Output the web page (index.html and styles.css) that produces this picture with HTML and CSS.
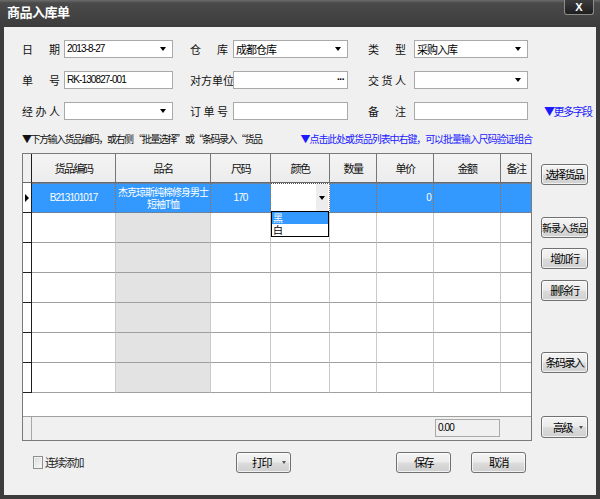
FILE: index.html
```html
<!DOCTYPE html>
<html lang="zh-CN">
<head>
<meta charset="utf-8">
<title>商品入库单</title>
<link rel="stylesheet" href="styles.css">
</head>
<body>
<div class="window">
  <div class="titlebar">
    <span class="title">商品入库单</span>
    <span class="close">X</span>
  </div>
  <div class="content">
    <div class="form">
      <div class="lbl"><span>日</span><span>期</span></div>
      <div class="field"><span class="num">2013-8-27</span><i class="arrow"></i></div>
      <div class="lbl l2"><span>仓</span><span>库</span></div>
      <div class="field"><span class="txt">成都仓库</span><i class="arrow"></i></div>
      <div class="lbl l3"><span>类</span><span>型</span></div>
      <div class="field"><span class="txt">采购入库</span><i class="arrow"></i></div>
      <div></div>

      <div class="lbl"><span>单</span><span>号</span></div>
      <div class="field"><span class="num">RK-130827-001</span></div>
      <div class="lbl l2"><span>对</span><span>方</span><span>单</span><span>位</span></div>
      <div class="field"><span class="dots">···</span></div>
      <div class="lbl l3"><span>交</span><span>货</span><span>人</span></div>
      <div class="field"><i class="arrow"></i></div>
      <div></div>

      <div class="lbl"><span>经</span><span>办</span><span>人</span></div>
      <div class="field"><i class="arrow"></i></div>
      <div class="lbl l2"><span>订</span><span>单</span><span>号</span></div>
      <div class="field"></div>
      <div class="lbl l3"><span>备</span><span>注</span></div>
      <div class="field"></div>
      <span class="more">▼更多字段</span>
    </div>

    <div class="hint">
      <span class="hint-l">▼下方输入货品编码，或右侧 “批量选择” 或“条码录入“货品</span>
      <span class="hint-r">▼点击此处或货品列表中右键，可以批量输入尺码验证组合</span>
    </div>

    <div class="main">
      <div class="grid">
        <div class="row head">
          <div class="rh"></div><div>货品编码</div><div>品名</div><div>尺码</div><div>颜色</div><div>数量</div><div>单价</div><div>金额</div><div>备注</div>
        </div>
        <div class="row sel">
          <div class="rh"><i class="marker"></i></div>
          <div><span class="num">B213101017</span></div>
          <div class="nm-text">杰克琼斯纯棉修身男士<br>短袖T恤</div>
          <div><span class="num">170</span></div>
          <div class="color">
            <span class="ddbtn"><i class="arrow"></i></span>
            <div class="ddlist"><div class="on">黑</div><div>白</div></div>
          </div>
          <div></div>
          <div class="right"><span class="num">0</span></div>
          <div></div>
          <div></div>
        </div>
        <div class="row"><div class="rh"></div><div></div><div class="nm"></div><div></div><div></div><div></div><div></div><div></div><div></div></div>
        <div class="row"><div class="rh"></div><div></div><div class="nm"></div><div></div><div></div><div></div><div></div><div></div><div></div></div>
        <div class="row"><div class="rh"></div><div></div><div class="nm"></div><div></div><div></div><div></div><div></div><div></div><div></div></div>
        <div class="row"><div class="rh"></div><div></div><div class="nm"></div><div></div><div></div><div></div><div></div><div></div><div></div></div>
        <div class="row"><div class="rh"></div><div></div><div class="nm"></div><div></div><div></div><div></div><div></div><div></div><div></div></div>
        <div class="row"><div class="rh"></div><div></div><div class="nm"></div><div></div><div></div><div></div><div></div><div></div><div></div></div>
        <div class="filler"></div>
        <div class="gfoot">
          <div class="rh"></div><div></div><div></div><div></div><div></div><div></div><div></div>
          <div><span class="total"><span class="num">0.00</span></span></div>
          <div></div>
        </div>
      </div>
      <div class="side">
        <span class="btn b-select">选择货品</span>
        <span class="btn b-new">新录入货品</span>
        <span class="btn b-add">增加行</span>
        <span class="btn b-del">删除行</span>
        <span class="btn b-bar">条码录入</span>
        <span class="btn b-adv drop"><span class="t">高级</span><i class="darr"></i></span>
      </div>
    </div>

    <div class="bottom">
      <div class="chk-group"><span class="chk"></span><span class="chk-label">连续添加</span></div>
      <span class="btn bbtn drop"><span class="t">打印</span><i class="darr"></i></span>
      <span class="btn bbtn save">保存</span>
      <span class="btn bbtn cancel">取消</span>
    </div>
  </div>
</div>
</body>
</html>
```

FILE: styles.css
```css
* { box-sizing: border-box; margin: 0; padding: 0; }
html, body { width: 600px; height: 499px; overflow: hidden; }
body {
  font-family: "Noto Sans CJK SC", "Noto Sans", sans-serif;
  font-size: 11px;
  line-height: 1;
  color: #000;
  background: #3b3b3b;
}
.window {
  width: 600px;
  height: 499px;
  display: flex;
  flex-direction: column;
  padding: 0 4px 4px;
  background: linear-gradient(#6c6c6c 0, #4a4a4a 3px, #3c3c3c 27px, #3c3c3c 100%);
}
.titlebar {
  height: 27px;
  flex: none;
  display: flex;
  align-items: flex-start;
}
.title {
  color: #fff;
  font-weight: bold;
  font-size: 13px;
  line-height: 14px;
  padding: 5px 0 0 3px;
  letter-spacing: -0.5px;
}
.close {
  margin-left: auto;
  margin-right: 2px;
  width: 30px;
  height: 15px;
  background: linear-gradient(#3c3c3c, #1f1f1f);
  border: 1px solid #8c8c8c;
  border-top: none;
  border-radius: 0 0 3px 3px;
  color: #fff;
  font: bold 11px/14px "Liberation Sans", sans-serif;
  text-align: center;
}
.content {
  flex: 1;
  background: #f0f0f0;
  padding: 13px 8px 0 18px;
}

/* form */
.form {
  display: grid;
  grid-template-columns: 42px 109px 60px 115px 66px 114px auto;
  grid-auto-rows: 18px;
  row-gap: 13px;
}
.lbl {
  display: flex;
  justify-content: space-between;
  align-items: center;
  width: 38px;
  color: #111;
}
.lbl.l2 { margin-left: 17px; }
.lbl.l3 { margin-left: 20px; }
.field {
  background: #fff;
  border: 1px solid #a9a9a9;
  display: flex;
  align-items: center;
  padding: 0 2px;
  overflow: hidden;
}
.num {
  font-family: "Liberation Sans", sans-serif;
  font-size: 10px;
  letter-spacing: -0.9px;
}
.txt { font-size: 11px; letter-spacing: -1px; }
.arrow {
  display: block;
  margin-left: auto;
  margin-right: 4px;
  width: 0;
  height: 0;
  border-left: 3.5px solid transparent;
  border-right: 3.5px solid transparent;
  border-top: 4px solid #000;
}
.dots {
  margin-left: auto;
  margin-right: 1px;
  font-family: "Liberation Sans", sans-serif;
  font-weight: bold;
  font-size: 10px;
  letter-spacing: -1px;
}
.more {
  color: #1a1aff;
  padding-left: 16px;
  letter-spacing: -1.5px;
  display: flex;
  align-items: center;
  white-space: nowrap;
}

/* hint */
.hint {
  display: flex;
  justify-content: space-between;
  align-items: center;
  width: 510px;
  height: 16px;
  margin-top: 11px;
  white-space: nowrap;
  font-size: 10px;
}
.hint-l { letter-spacing: -1.5px; color: #111; }
.hint-r { color: #1a1aff; letter-spacing: -1.1px; }

/* main */
.main {
  display: flex;
  gap: 9px;
  margin-top: 6px;
  height: 288px;
}
.grid {
  width: 510px;
  border: 1px solid #7a7a7a;
  display: flex;
  flex-direction: column;
  background: #fff;
}
.row, .gfoot {
  display: grid;
  grid-template-columns: 9px 84px 95px 60px 59px 47px 57px 67px 30px;
  height: 30px;
  flex: none;
}
.row.head { height: 29px; }
.row > div {
  border-right: 1px solid #cacaca;
  border-bottom: 1px solid #a0a0a0;
  display: flex;
  align-items: center;
  justify-content: center;
  text-align: center;
}
.row > div:last-child { border-right: none; }
.head > div {
  background: linear-gradient(#f4f4f4, #ececec);
  border-right-color: #767676;
  border-bottom-color: #686868;
  letter-spacing: -1.5px;
  color: #111;
}
.row > .rh {
  border-right-color: #1e1e1e;
  border-bottom-color: #1e1e1e;
  background: #fff;
}
.head > .rh { background: #f0f0f0; border-bottom-color: #686868; }
.row > .nm { background: #e3e3e3; }

.sel > div {
  background: #3399ff;
  color: #fff;
  border-top: 1px dotted #9c6c48;
  border-right: 1px dotted #9c6c48;
  border-bottom: 1px dotted #9c6c48;
}
.sel > .rh {
  background: #fff;
  border-top: none;
  border-right: 1px solid #1e1e1e;
  border-bottom: 1px solid #1e1e1e;
  justify-content: flex-start;
  padding-left: 2px;
}
.marker {
  display: block;
  width: 0;
  height: 0;
  border-top: 4px solid transparent;
  border-bottom: 4px solid transparent;
  border-left: 4px solid #000;
}
.sel > .nm-text {
  font-size: 10px;
  line-height: 12px;
  letter-spacing: -1px;
  white-space: nowrap;
}
.sel > .right { justify-content: flex-end; padding-right: 2px; }
.sel > .color {
  position: relative;
  background: #fff;
  border-top-color: #555;
  justify-content: flex-end;
  align-items: flex-start;
}
.ddbtn {
  width: 12px;
  height: 27px;
  margin-right: 1px;
  background: #ededed;
  display: flex;
  align-items: center;
  justify-content: center;
}
.ddbtn .arrow { margin: 0; }
.ddlist {
  position: absolute;
  left: 0;
  top: 27px;
  width: 58px;
  border: 1px solid #000;
  background: #fff;
  z-index: 2;
  color: #000;
  text-align: left;
}
.ddlist div {
  height: 12px;
  line-height: 12px;
  padding-left: 1px;
  font-size: 10px;
}
.ddlist .on { background: #3399ff; color: #fff; }

.filler { flex: 1; background: #fff; }
.gfoot {
  height: 24px;
  border-top: 1px solid #a0a0a0;
  background: #f0f0f0;
}
.gfoot > .rh { border-right: 1px solid #a8a8a8; }
.total {
  display: flex;
  align-items: center;
  height: 18px;
  margin: 2px 0 0 1px;
  width: 65px;
  border: 1px solid #a9a9a9;
  background: #f0f0f0;
  padding-left: 2px;
}

/* buttons */
.btn {
  height: 21px;
  border: 1px solid #707070;
  border-radius: 3px;
  background: linear-gradient(#f4f4f4 0%, #ebebeb 48%, #dcdcdc 52%, #cfcfcf 100%);
  box-shadow: inset 0 0 0 1px rgba(255, 255, 255, 0.7);
  display: flex;
  align-items: center;
  justify-content: center;
  font-size: 11px;
  letter-spacing: -1.5px;
  white-space: nowrap;
  color: #000;
  flex: none;
}
.side {
  width: 47px;
  display: flex;
  flex-direction: column;
  padding-top: 11px;
}
.b-new { margin-top: 32px; font-size: 10px; letter-spacing: -1px; }
.b-add { margin-top: 10px; }
.b-del { margin-top: 11px; }
.b-bar { margin-top: 51px; }
.b-adv { margin-top: 43px; height: 22px; }
.drop .t { flex: 1; text-align: center; padding-left: 4px; }
.darr {
  display: block;
  width: 0;
  height: 0;
  margin-right: 4px;
  border-left: 2.5px solid transparent;
  border-right: 2.5px solid transparent;
  border-top: 3px solid #555;
}

/* bottom */
.bottom {
  display: flex;
  align-items: center;
  height: 21px;
  margin-top: 11px;
}
.chk-group {
  width: 214px;
  display: flex;
  align-items: center;
  padding-left: 11px;
}
.chk {
  width: 10px;
  height: 13px;
  border: 1px solid #8e8f8f;
  background: linear-gradient(135deg, #d8d8d8, #fbfbfb);
  box-shadow: inset 0 0 0 1px #f2f2f2;
}
.chk-label { margin-left: 2px; letter-spacing: -1.5px; color: #222; }
.bbtn { width: 55px; }
.save { margin-left: 105px; }
.cancel { margin-left: 20px; }
```
